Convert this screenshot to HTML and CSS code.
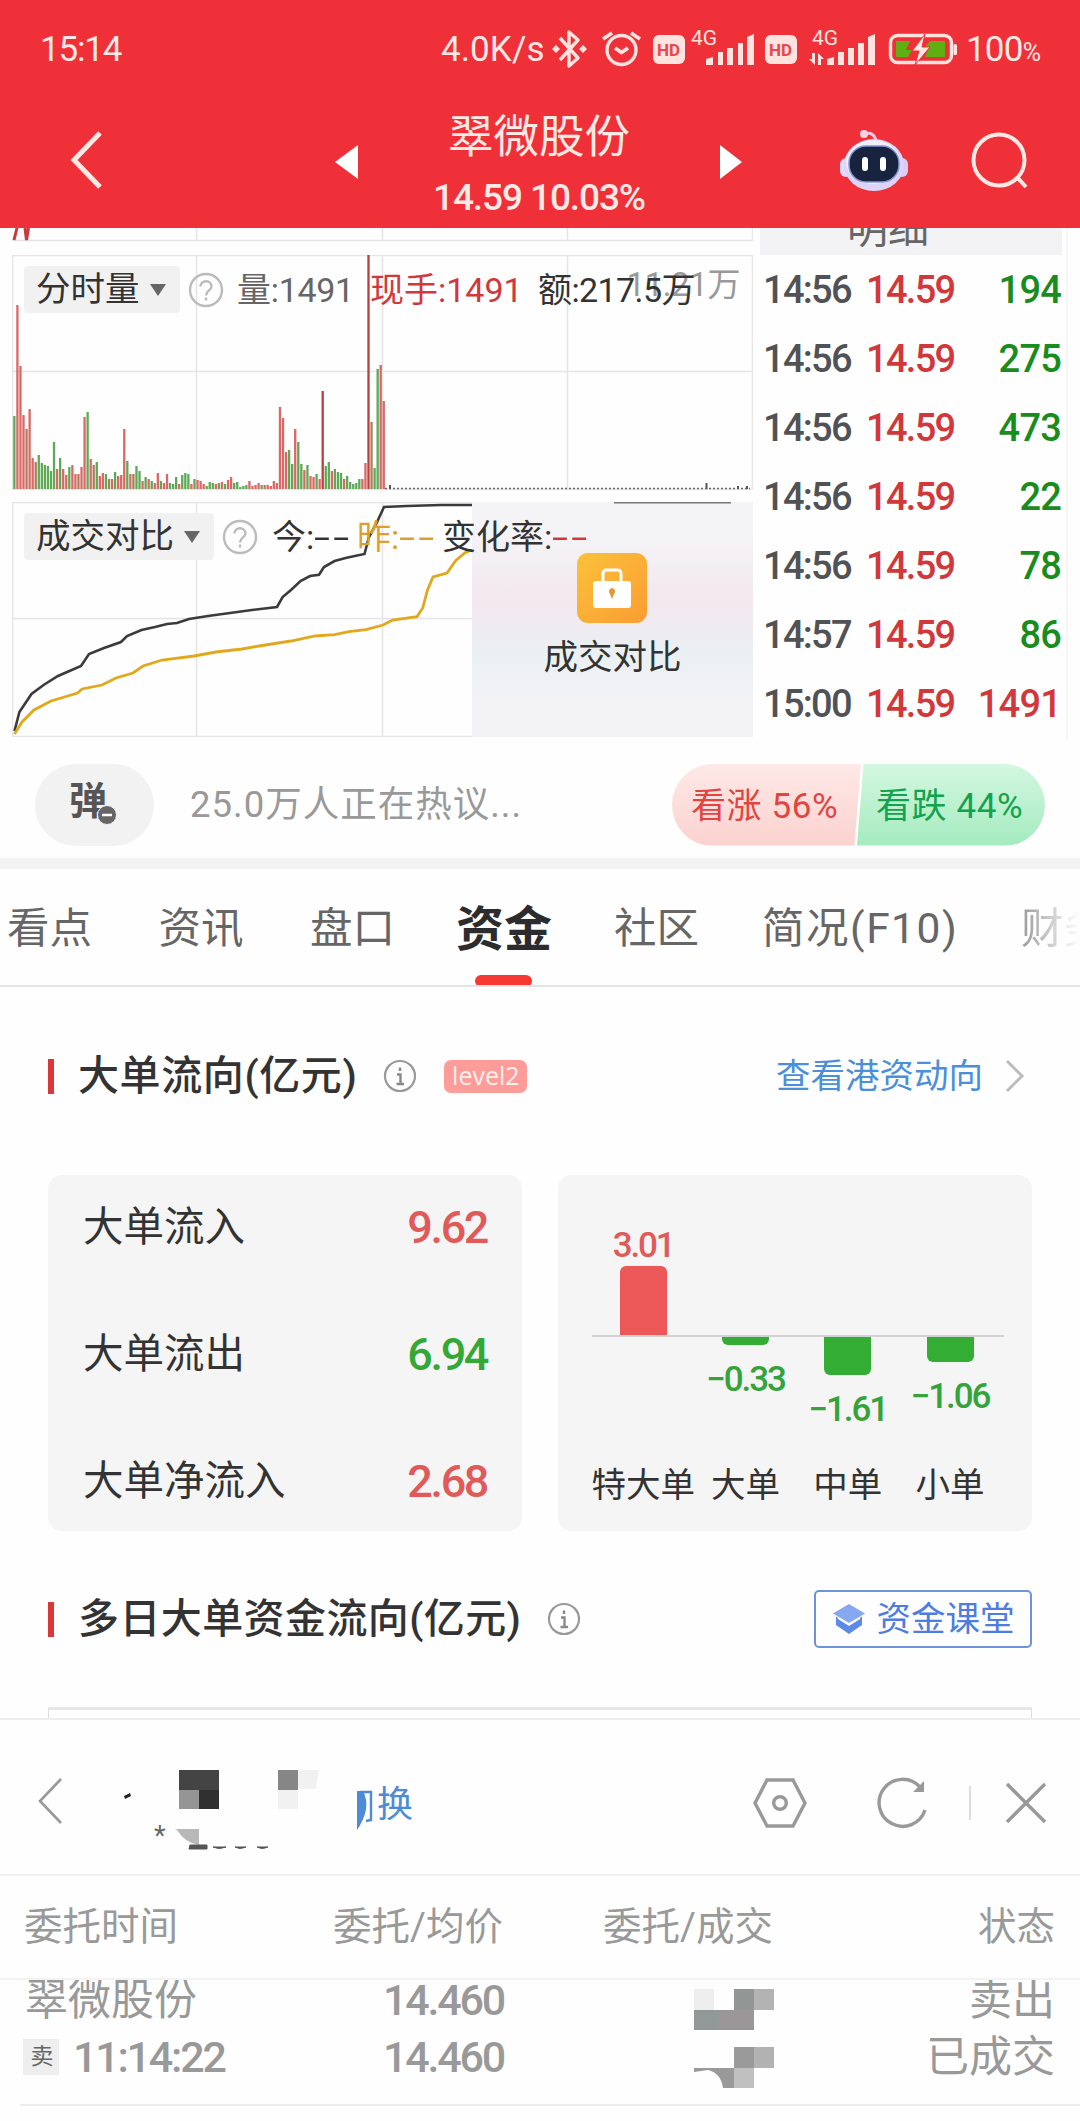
FILE: index.html
```html
<!DOCTYPE html>
<html lang="zh-CN">

<head>
    <meta charset="utf-8"/>
    <title>翠微股份</title>
    <meta name="viewport" content="width=device-width, initial-scale=1">
    <link rel="stylesheet" href="styles.css">
</head>
<body>
<header class="top">
    <div class="status">
        <span class="clock">15:14</span>
        <span class="speed">4.0K/s</span>
        <svg class="status-icons" width="408" height="48" viewBox="552 24 408 48">
            <g fill="none" stroke="#ffe3df" stroke-width="3.4" stroke-linejoin="round">
                <!-- bluetooth -->
                <path d="M560 37l18 20-9 8V31l9 8-18 20"/>
                <!-- alarm -->
                <circle cx="621.500" cy="49" r="14.500"/>
                <path d="M615 47l6.500 4.500L628 47M603 38l9-6M640 38l-9-6" stroke-width="3.800"/>
                <rect x="890.500" y="34.500" width="61" height="27" rx="7"/>
            </g>
            <g fill="#ffe3df">
                <path d="M552 48l4-4 4 4-4 4zM579 48l4-4 4 4-4 4z"/>
                <rect x="653" y="34" width="32" height="29" rx="6"/>
                <rect x="765" y="34" width="32" height="29" rx="6"/>
                <path d="M706 64v-6l7-2v8zM718 64V51h5v13zM727 64V47h6v17zM738 64V42h5v22zM747 64V36l7-3v31z"/>
                <path d="M827 64v-6l7-2v8zM838 64V51h6v13zM848 64V47h6v17zM858 64V42h6v22zM868 64V36l7-3v31z"/>
                <path d="M812 52h3v12l-6-6h3zM818 64V52l6 6h-3v6z"/>
                <rect x="953.500" y="43" width="3.500" height="11" rx="1.500"/>
                <text x="691" y="44" font-size="21">4G</text>
                <text x="812" y="44" font-size="21">4G</text>
            </g>
            <g fill="#e8474a" font-size="17" font-weight="700">
                <text x="657" y="54.500">HD</text>
                <text x="769" y="54.500">HD</text>
            </g>
            <path d="M896 40h14l-4 9h6l-4 7h-12zM930 40h15v16h-20l4-9h-5z" fill="#5fae12"/>
            <path d="M925 33l-13 17h7l-4 14 15-18h-8z" fill="#ffe9e4" stroke="#f03038" stroke-width="1"/>
        </svg>
        <span class="battery">100<small>%</small></span>
    </div>
    <nav class="nav">
        <svg class="back" width="36" height="62" viewBox="0 0 36 62"><path d="M31 4L5 31l26 27" fill="none" stroke="#ffe9e4" stroke-width="5"/></svg>
        <svg class="prev" width="23" height="34" viewBox="0 0 23 34"><path d="M23 0v34L0 17z" fill="#fff"/></svg>
        <div class="title">
            <h1>翠微股份</h1>
            <p>14.59 10.03%</p>
        </div>
        <svg class="next" width="22" height="34" viewBox="0 0 22 34"><path d="M0 0v34l22-17z" fill="#fff"/></svg>
        <svg class="robot" width="68" height="64" viewBox="0 0 68 64">
            <path d="M25 6c6-2 10 1 11 7" fill="none" stroke="#f6c4dc" stroke-width="3"/>
            <circle cx="24" cy="6" r="4" fill="#fbd0e0"/>
            <rect x="0" y="30" width="12" height="19" rx="6" fill="#e3d9fb"/>
            <rect x="56" y="30" width="12" height="19" rx="6" fill="#d9cdf8"/>
            <ellipse cx="34" cy="37" rx="30" ry="26" fill="#dcd4fa"/>
            <ellipse cx="33" cy="34" rx="27" ry="22" fill="#f2effd"/>
            <rect x="9" y="18" width="50" height="36" rx="17" fill="#17233f" stroke="#8296cf" stroke-width="1.500"/>
            <rect x="22" y="29" width="6" height="14" rx="3" fill="#fff"/>
            <rect x="40" y="29" width="6" height="14" rx="3" fill="#fff"/>
        </svg>
        <svg class="search" width="58" height="58" viewBox="0 0 58 58"><g fill="none" stroke="#ffe9e4" stroke-width="4"><circle cx="28" cy="28" r="25.500"/><path d="M46 45l9 10"/></g></svg>
    </nav>
</header>

<section class="quote">
    <div class="charts">
        <svg class="strip" width="741" height="27" viewBox="12 228 741 27">
            <path class="grid" d="M12 240.500H752.500V228M196.500 228v12M382.500 228v12M567.500 228v12"/>
            <path d="M14 240l3-12M25 228l1.500 12 2-12" fill="none" stroke="#c8383c" stroke-width="3"/>
        </svg>
        <div class="panel volume">
            <svg class="plot" width="741" height="235" viewBox="12 255 741 235">
                <path class="grid" d="M12.500 255.500H752.500V489.500H12.500zM196.500 255v235M382.500 255v235M567.500 255v235M12 371.500H753"/>
                <g id="bars"></g>
                <path d="M385 488.500H750" stroke="#666" stroke-width="1.500" stroke-dasharray="2 2"/>
                <path d="M390 485v4M706.500 483v6M738 486v3M747 486v3" stroke="#555" stroke-width="2"/>
            </svg>
            <span class="peak">11.21万</span>
            <div class="readout">
                <span class="picker">分时量<i class="caret"></i></span>
                <svg class="help" width="36" height="36" viewBox="0 0 36 36"><use href="#help"/></svg>
                <span class="vol">量:1491</span>
                <span class="hand">现手:1491</span>
                <span class="amount">额:217.5万</span>
            </div>
        </div>
        <div class="panel compare">
            <svg class="plot" width="741" height="235" viewBox="12 502 741 235">
                <path class="grid" d="M12.500 502.500H752.500V736.500H12.500zM196.500 502v235M382.500 502v235M12 618.500H753"/>
                <polyline fill="none" stroke="#3b3b3d" stroke-width="2.600" points="14.500,731 19.400,712 31.500,694 43.600,685 58,676 81,666 89,654 104,648 121,642 127,636 141.500,630 155,627 167,624 177,623 189,619 208,616 230,613 252,610 277,607 282.600,597 291,590 300.500,581 310,576 319,574.700 324,567 334.500,561 346.600,557.700 364.500,554 369,537 375.700,525 384,507 407,506 441,505 472,505"/>
                <polyline fill="none" stroke="#e2a81c" stroke-width="2.800" points="14.500,734 22,722 34,710 51,701 77.600,693 82,689 102,685 116,678 133,673 143,666 162,660 194,656 216,652 242,649 259,646 291,641 315,636 334.500,634.700 349,631.700 366,629.700 383,625 392.600,620 417,616.700 422.700,608 427.500,590 433,577 447,573 455.600,560.700 465,552.700 472,550"/>
            </svg>
            <div class="locked">
                <svg width="70" height="70" viewBox="0 0 70 70">
                    <defs><linearGradient id="gold" x1="0" y1="0" x2="1" y2="1"><stop offset="0" stop-color="#fcc13a"/><stop offset="1" stop-color="#fa9d33"/></linearGradient></defs>
                    <rect width="70" height="70" rx="11" fill="url(#gold)"/>
                    <rect x="16" y="28" width="38" height="27" rx="3" fill="#fff"/>
                    <path d="M26 29v-8q0-4 4-4h10q4 0 4 4v8" fill="none" stroke="#fff" stroke-width="3"/>
                    <path d="M35 35a3.500 3.500 0 0 1 2 6l-2 5-2-5a3.500 3.500 0 0 1 2-6z" fill="#e79a2a"/>
                </svg>
                <span>成交对比</span>
            </div>
            <div class="readout">
                <span class="picker wide">成交对比<i class="caret"></i></span>
                <svg class="help" width="36" height="36" viewBox="0 0 36 36"><use href="#help"/></svg>
                <span class="today">今:<b>--</b></span>
                <span class="yesterday">昨:<b>--</b></span>
                <span class="rate">变化率:<b class="red">--</b></span>
            </div>
        </div>
    </div>
    <div class="ticks">
        <div class="ticks-head"><span>明细</span></div>
        <ul>
            <li><span>14:56</span><span class="red">14.59</span><span class="green">194</span></li>
            <li><span>14:56</span><span class="red">14.59</span><span class="green">275</span></li>
            <li><span>14:56</span><span class="red">14.59</span><span class="green">473</span></li>
            <li><span>14:56</span><span class="red">14.59</span><span class="green">22</span></li>
            <li><span>14:56</span><span class="red">14.59</span><span class="green">78</span></li>
            <li><span>14:57</span><span class="red">14.59</span><span class="green">86</span></li>
            <li><span>15:00</span><span class="red">14.59</span><span class="red">1491</span></li>
        </ul>
    </div>
</section>

<section class="talk">
    <div class="danmu">弹<svg width="20" height="20" viewBox="0 0 20 20"><circle cx="10" cy="10" r="9.500" fill="#666" stroke="#f2f2f2"/><path d="M5 10h10" stroke="#fff" stroke-width="2.500"/></svg></div>
    <span class="hot">25.0万人正在热议...</span>
    <div class="vote"><span class="up">看涨 56%</span><span class="down">看跌 44%</span></div>
</section>

<nav class="tabs">
    <span>看点</span>
    <span>资讯</span>
    <span>盘口</span>
    <span class="active">资金</span>
    <span>社区</span>
    <span class="f10">简况(F10)</span>
    <span class="fade">财务</span>
</nav>

<main class="funds">
    <div class="heading first">
        <h2>大单流向(亿元)</h2>
        <svg class="info" width="34" height="34" viewBox="0 0 34 34"><use href="#info"/></svg>
        <span class="level">level2</span>
        <a class="more">查看港资动向<svg width="20" height="36" viewBox="0 0 20 36"><path d="M2 3l15 15L2 33" fill="none" stroke="#bbb" stroke-width="3"/></svg></a>
    </div>
    <div class="cards">
        <div class="card flow">
            <p><span>大单流入</span><b class="up">9.62</b></p>
            <p><span>大单流出</span><b class="down">6.94</b></p>
            <p><span>大单净流入</span><b class="up">2.68</b></p>
        </div>
        <div class="card orders">
            <div class="col"><div class="above"><em class="up">3.01</em><i style="height:69px"></i></div><div class="below"></div><span>特大单</span></div>
            <div class="col"><div class="above"></div><div class="below"><i style="height:8px"></i><em>−0.33</em></div><span>大单</span></div>
            <div class="col"><div class="above"></div><div class="below"><i style="height:38px"></i><em>−1.61</em></div><span>中单</span></div>
            <div class="col"><div class="above"></div><div class="below"><i style="height:25px"></i><em>−1.06</em></div><span>小单</span></div>
        </div>
    </div>
    <div class="heading second">
        <h2>多日大单资金流向(亿元)</h2>
        <svg class="info" width="34" height="34" viewBox="0 0 34 34"><use href="#info"/></svg>
        <a class="class-btn"><svg width="34" height="32" viewBox="0 0 34 32"><path d="M17 1l16 9.500L17 20 1 10.500z" fill="#86a8ee"/><path d="M4 13.500l13 8 13-8V22l-13 9L4 22z" fill="#5c8ae6"/><path d="M6 15l11 7 11-7" fill="none" stroke="#fff" stroke-width="1.500"/></svg>资金课堂</a>
    </div>
    <div class="next-box"></div>
</main>

<section class="trade">
    <div class="account">
        <svg class="acc-back" width="28" height="50" viewBox="0 0 28 50"><path d="M24 3L3 25l21 22" fill="none" stroke="#999" stroke-width="2.600"/></svg>
        <!-- censored account name -->
        <svg class="mosaic" width="212" height="100" viewBox="115 1757 212 100">
            <path d="M124 1796l6-3 1 3-6 3z" fill="#222"/>
            <path d="M179 1770h40v20h-40z" fill="#444"/>
            <path d="M179 1790h20v19h-20z" fill="#959595"/>
            <path d="M199 1790h20v19h-20z" fill="#303030"/>
            <path d="M278 1770h20v20h-20z" fill="#868686"/>
            <path d="M298 1770h21l-3 19h-18zM278 1790h20v19h-20z" fill="#f1f1f1"/>
            <path d="M175 1829h24v16q-14-2-22-15z" fill="#b8b8b8"/>
            <path d="M190 1845h17v4h-18zM213 1847q6 3 13 0zM235 1847q5 3 11 0zM257 1847q5 3 11 0z" fill="#555" stroke="#555"/>
            <text x="154" y="1845" font-size="27" fill="#666">*</text>
        </svg>
        <span class="switch"><svg width="17" height="42" viewBox="0 0 17 42"><path d="M0 2h6q9 17-6 39z" fill="#4d8bd8"/><path d="M3 3h11v28l-5 1" fill="none" stroke="#4d8bd8" stroke-width="2.400"/></svg>换</span>
        <svg class="gear" width="56" height="52" viewBox="0 0 56 52"><g fill="none" stroke="#999" stroke-width="3.400"><path d="M15 3h26l12 23-12 23H15L3 26z"/><circle cx="28" cy="26" r="6.300"/></g></svg>
        <svg class="reload" width="54" height="54" viewBox="0 0 54 54"><path d="M49 34A23.500 23.500 0 1 1 44 11" fill="none" stroke="#999" stroke-width="3.400"/><path d="M48 5v11H37z" fill="#999"/></svg>
        <span class="sep"></span>
        <svg class="close" width="42" height="42" viewBox="0 0 42 42"><path d="M2 2l38 38M40 2L2 40" stroke="#999" stroke-width="3.400"/></svg>
    </div>
    <div class="row head"><span>委托时间</span><span>委托/均价</span><span>委托/成交</span><span>状态</span></div>
    <div class="orders-list">
        <div class="row name"><span>翠微股份</span><span>14.460</span>
            <span><svg width="81" height="42" viewBox="0 0 81 42"><path d="M0 0h20v21H0z" fill="#eee"/><path d="M40 0h20v41H40z" fill="#929695"/><path d="M60 0h20v21H60z" fill="#b3b3b3"/><path d="M0 21h25v20H0z" fill="#919897"/><path d="M25 21h35v20H25z" fill="#9b9798"/></svg></span>
            <span>卖出</span></div>
        <div class="row time"><span><i class="sell">卖</i>11:14:22</span><span>14.460</span>
            <span><svg width="81" height="42" viewBox="0 0 81 42"><path d="M40 0h20v21H40z" fill="#9a9a9a"/><path d="M60 0h20v21H60z" fill="#b2b2b2"/><path d="M0 21h40v20H29q-2-15-15-18L0 25z" fill="#999"/><path d="M40 21h20v20H40z" fill="#c0c0c0"/></svg></span>
            <span>已成交</span></div>
    </div>
</section>

<svg width="0" height="0" class="symbols">
    <symbol id="help" viewBox="0 0 36 36"><circle cx="18" cy="18" r="16" fill="none" stroke="#bbb" stroke-width="2.400"/><path d="M12.500 14.500c0-7 11-7 11 0 0 4-5.500 4-5.500 9M18 25.500v3" fill="none" stroke="#bbb" stroke-width="2.400"/></symbol>
    <symbol id="info" viewBox="0 0 34 34"><circle cx="17" cy="17" r="15" fill="none" stroke="#999" stroke-width="2.200"/><path d="M17 8.500v3.500M14 15.500h3.500V25M13.500 25h7.500" fill="none" stroke="#888" stroke-width="2.400"/></symbol>
</svg>

<script>
    // minute volume: r = up, g = down, b/d = darker bars, number = bar height
    var data = "g73 r184 r123 r74 b60 r80 r31 b27 g34 g26 g24 g23 g18 g47 r20 g31 r20 r14 g22 r24 r15 b15 r22 r72 g77 r30 b24 g27 r13 r16 g15 b10 r10 g17 r13 r14 r60 g28 r15 b15 g23 g18 r8 g12 r10 g8 r6 r16 g8 r6 r15 g6 g5 g12 r5 g14 g16 g15 r5 g10 r9 r8 r5 g3 g7 g6 r5 g6 r7 g5 r9 r12 g6 g7 g2 g3 g4 r8 r3 r4 r6 g4 r4 r4 r3 r8 r6 r82 r71 r37 g39 g25 r60 g47 g25 r19 g24 r13 r12 g15 r10 d98 g23 g27 r18 g20 g17 g16 r10 g13 g7 g5 g6 g10 r10 r26 d234 b67 g21 g120 r124 r88";
    var colors = {r: '#dc6765', g: '#5caa55', b: '#a9805c', d: '#b8403f'};
    var bars = document.getElementById('bars');

    data.split(' ').forEach(function (item, i) {
        var h = +item.slice(1);
        var rect = document.createElementNS('http://www.w3.org/2000/svg', 'rect');
        rect.setAttribute('x', 13.200 + i * 3.053);
        rect.setAttribute('y', 489 - h);
        rect.setAttribute('width', 2.300);
        rect.setAttribute('height', h);
        rect.setAttribute('fill', colors[item[0]]);
        bars.appendChild(rect);
    });
</script>
</body>
</html>
```

FILE: styles.css
```css
* {
    box-sizing: border-box;
}
body {
    margin: 0;
    width: 1080px;
    height: 2121px;
    overflow: hidden;
    background: #fefefe;
    color: #333;
    font-family: Roboto, "Noto Sans CJK SC", sans-serif;
    line-height: 1;
}
h1, h2, p, ul {
    margin: 0;
    padding: 0;
    font-weight: 400;
}
b, i, em {
    font-weight: inherit;
    font-style: normal;
}
svg {
    display: block;
    flex: none;
}
span {
    white-space: nowrap;
}
.symbols {
    position: absolute;
}

/* header */
.top {
    height: 228px;
    background: #f03038;
    color: #ffe9e4;
}
.status {
    display: flex;
    align-items: center;
    height: 97px;
    padding-left: 40px;
    font-size: 35px;
}
.clock {
    width: 401px;
    padding-top: 2px;
    letter-spacing: -1.2px;
}
.speed {
    width: 111px;
    padding-top: 2px;
    letter-spacing: 0.1px;
}
.battery {
    margin-left: 6px;
    padding-top: 1px;
    letter-spacing: -0.8px;
}
.battery small {
    font-size: 25px;
}
.nav {
    display: flex;
    height: 131px;
    padding-left: 69px;
}
.back {
    margin-top: 32px;
}
.prev {
    margin: 48px 0 0 230px;
}
.title {
    width: 362px;
    text-align: center;
}
.title h1 {
    margin-top: 18px;
    font-size: 45.5px;
}
.title p {
    margin-top: 18px;
    font-size: 37px;
    font-weight: 500;
    letter-spacing: -1.1px;
}
.next {
    margin-top: 48px;
}
.robot {
    margin: 31px 0 0 98px;
}
.search {
    margin: 35px 0 0 63px;
}

/* charts and ticks */
.quote {
    display: flex;
    height: 512px;
}
.charts {
    width: 741px;
    margin-left: 12px;
}
.grid {
    fill: none;
    stroke: #e6e4e6;
    stroke-width: 1.5;
}
.panel {
    position: relative;
    height: 235px;
    margin-bottom: 12px;
}
.plot {
    position: absolute;
    top: 0;
    left: 0;
}
.readout {
    position: relative;
    display: flex;
    align-items: center;
    padding: 11px 0 0 12px;
    font-size: 34px;
}
.picker {
    display: flex;
    align-items: center;
    width: 156px;
    height: 47px;
    padding-left: 12px;
    border-radius: 4px;
    background: #f1f1f2;
    font-size: 34.5px;
}
.picker.wide {
    width: 190px;
}
.caret {
    margin-left: 10px;
    border: 8px solid transparent;
    border-top: 12px solid #666;
    border-bottom: 0;
}
.help {
    margin-left: 8px;
}
.vol {
    width: 133px;
    margin-left: 13px;
    color: #666;
    letter-spacing: -0.3px;
}
.hand {
    width: 168px;
    color: #d0383c;
}
.amount {
    letter-spacing: -0.6px;
}
.peak {
    position: absolute;
    top: 13px;
    right: 13px;
    color: #999;
    font-size: 33px;
    letter-spacing: -0.4px;
}
.readout b {
    display: inline-block;
    letter-spacing: 2px;
    transform: scaleX(1.7);
    transform-origin: left;
}
.today {
    width: 85px;
    margin-left: 14px;
}
.yesterday {
    width: 85px;
    color: #dd9f2b;
}
.locked {
    position: absolute;
    top: 0;
    right: 0;
    display: flex;
    flex-direction: column;
    align-items: center;
    width: 281px;
    height: 235px;
    padding: 51px 0 0;
    background: linear-gradient(#777, #777) 142px 0 / 117px 1.5px no-repeat, linear-gradient(#f4f3f6 15%, #f3e8ee 42%, #eaf0f3 65%, #f3f3f6 85%);
}
.locked span {
    margin-top: 17px;
    font-size: 34.5px;
}
.locked svg {
    margin-right: 1px;
}
.red {
    color: #d0383c;
}
.green {
    color: #188c1c;
}
.ticks {
    width: 315px;
    padding-left: 7px;
    border-right: 2px solid #f6f5f7;
}
.ticks-head {
    width: 302px;
    height: 27px;
    overflow: hidden;
    background: #f3f2f4;
    color: #666;
    font-size: 41px;
}
.ticks-head span {
    display: block;
    margin-top: -19px;
    padding-left: 87px;
}
.ticks ul {
    list-style: none;
    width: 302px;
}
.ticks li {
    display: grid;
    grid-template-columns: 103px 96px 1fr;
    align-items: center;
    height: 69px;
    padding-left: 3px;
    color: #505255;
    font-size: 38px;
    font-weight: 500;
    letter-spacing: -1.7px;
}
.ticks li span:last-child {
    text-align: right;
    padding-right: 1px;
    letter-spacing: -0.8px;
}

/* discussion bar */
.talk {
    display: flex;
    align-items: center;
    height: 129px;
    padding: 11px 35px 0;
    border-bottom: 11px solid #f3f3f3;
}
.danmu {
    position: relative;
    flex: none;
    width: 119px;
    height: 82px;
    padding: 18px 0 0 34px;
    border-radius: 41px;
    background: #f2f2f2;
    color: #555;
    font-size: 38px;
    font-weight: 700;
}
.danmu svg {
    position: absolute;
    left: 62px;
    top: 41px;
}
.hot {
    flex: none;
    width: 518px;
    padding: 2px 0 0 36px;
    color: #999;
    font-size: 36.5px;
    letter-spacing: 1px;
}
.vote {
    display: flex;
    flex: none;
    width: 373px;
    height: 82px;
    border-radius: 41px;
    overflow: hidden;
    font-size: 35px;
    line-height: 85px;
    letter-spacing: 0.6px;
}
.vote .up {
    flex: none;
    width: 189px;
    padding-left: 19px;
    background: linear-gradient(#fee9e7, #fbd2cf);
    color: #e04540;
    clip-path: polygon(0 0, 100% 0, 96.500% 100%, 0 100%);
}
.vote .down {
    flex: none;
    width: 188px;
    margin-left: -4px;
    padding-left: 19px;
    background: linear-gradient(#d4f7e1, #a4ebbf);
    color: #12a34e;
    clip-path: polygon(3.500% 0, 100% 0, 100% 100%, 0 100%);
}

/* tabs */
.tabs {
    display: flex;
    align-items: center;
    height: 118px;
    padding-left: 7px;
    border-bottom: 2px solid #e4e4e4;
    overflow: hidden;
    color: #666;
    font-size: 42.5px;
}
.tabs span {
    flex: none;
    margin-right: 66.5px;
    padding-top: 5px;
}
.tabs span:nth-child(3) {
    margin-right: 61px;
}
.tabs .active {
    position: relative;
    margin-right: 62px;
    color: #2c2c2e;
    font-size: 48px;
    font-weight: 700;
}
.tabs .active::after {
    content: "";
    position: absolute;
    left: 19px;
    bottom: -33px;
    width: 57px;
    height: 12px;
    border-radius: 6px;
    background: #f63a33;
}
.tabs span:nth-child(5) {
    margin-right: 63px;
}
.tabs .f10 {
    width: 259px;
    margin-right: 0;
    letter-spacing: 1.5px;
}
.tabs .fade {
    margin-right: 0;
    background: linear-gradient(90deg, #999, #fefefe 58px);
    -webkit-background-clip: text;
    color: transparent;
}

/* fund flow */
.funds {
    height: 731px;
    padding: 0 48px;
    overflow: hidden;
}
.heading {
    display: flex;
    align-items: center;
}
.heading h2 {
    padding-left: 24px;
    border-left: 6px solid #d93838;
    font-size: 41px;
    font-weight: 500;
    line-height: 35px;
    letter-spacing: 0.4px;
}
.heading.first {
    height: 178px;
}
.heading.first h2 {
    letter-spacing: 0.6px;
}
.heading .info {
    margin-left: 26px;
}
.level {
    width: 83px;
    height: 33px;
    margin-left: 27px;
    border-radius: 7px;
    background: #fd9c98;
    color: #fff0ee;
    font-family: "Open Sans", sans-serif;
    font-size: 25px;
    line-height: 31px;
    text-align: center;
}
.more {
    display: flex;
    align-items: center;
    margin-left: auto;
    margin-right: 7px;
    color: #4a8fda;
    font-size: 34.5px;
}
.more svg {
    margin-left: 22px;
}
.cards {
    display: flex;
    justify-content: space-between;
    margin-top: 10px;
}
.card {
    width: 474px;
    height: 356px;
    border-radius: 14px;
    background: #f5f5f5;
}
.card.flow {
    padding: 0 35px;
}
.flow p {
    display: flex;
    justify-content: space-between;
    align-items: center;
    height: 127px;
    padding-top: 1px;
    font-size: 40.5px;
}
.flow p:first-child {
    height: 104px;
    margin-bottom: 11px;
}
.flow b {
    font-size: 45px;
    font-weight: 500;
    letter-spacing: -2.4px;
}
.flow .up, .orders .up {
    color: #e05a5a;
}
.flow .down {
    color: #34a836;
}
.orders {
    display: flex;
    padding: 0 34px;
    background: linear-gradient(#d2d2d2, #d2d2d2) 34px 160px / 412px 2px no-repeat #f5f5f5;
}
.col {
    width: 102.3px;
    flex: none;
    display: flex;
    flex-direction: column;
    align-items: center;
    font-size: 34.5px;
}
.above, .below {
    display: flex;
    flex-direction: column;
    align-items: center;
}
.above {
    height: 160px;
    justify-content: flex-end;
}
.below {
    height: 133px;
    padding-top: 2px;
}
.col em {
    color: #34a33a;
    font-size: 35px;
    font-weight: 500;
    letter-spacing: -2.1px;
    white-space: nowrap;
}
.above em {
    margin-bottom: 3px;
}
.below em {
    margin-top: 17px;
}
.col i {
    width: 47px;
    border-radius: 6px 6px 0 0;
    background: #ec5858;
}
.below i {
    border-radius: 0 0 6px 6px;
    background: #34ad35;
}
.heading.second {
    height: 58px;
    margin-top: 59px;
}
.class-btn {
    display: flex;
    align-items: center;
    justify-content: center;
    gap: 11px;
    width: 218px;
    height: 58px;
    margin-left: auto;
    border: 2px solid #6f92dc;
    border-radius: 5px;
    color: #4f7ce0;
    font-size: 34.5px;
}
.next-box {
    height: 30px;
    margin-top: 59px;
    border: 1px solid #ddd;
    border-top: 3px solid #e6e6e6;
}

/* trade panel */
.trade {
    border-top: 2px solid #eeeeef;
    background: #fefefe;
    color: #999;
}
.account {
    display: flex;
    align-items: center;
    height: 154px;
    padding: 12px 33px 0 37px;
}
.acc-back {
    margin-bottom: 4px;
}
.mosaic {
    margin: 8px 0 0 50px;
}
.switch {
    display: flex;
    align-items: center;
    margin-left: 30px;
    padding-top: 4px;
    color: #4d8bd8;
    font-size: 36px;
}
.switch svg {
    margin: 10px 3px 0 0;
}
.gear {
    margin-left: auto;
}
.reload {
    margin-left: 68px;
}
.sep {
    width: 2px;
    height: 34px;
    margin: 0 34px 0 39px;
    background: #ddd;
}
.row {
    display: grid;
    grid-template-columns: 240px 239px 270px 1fr;
    align-items: center;
    padding: 0 25px;
}
.row > span:nth-child(n+2) {
    justify-self: end;
}
.row.head {
    height: 106px;
    padding: 1px 25px 0 24px;
    border-top: 2px solid #f1f1f1;
    border-bottom: 2px solid #f3f3f3;
    font-size: 38.5px;
}
.orders-list {
    height: 126px;
    margin-left: 20px;
    overflow: hidden;
    border-bottom: 2px solid #eee;
}
.orders-list .row {
    margin-left: -20px;
    font-size: 43px;
}
.orders-list .row > span:nth-child(2) {
    letter-spacing: -2.2px;
    font-weight: 500;
}
.name {
    height: 52px;
    margin-top: -11px;
}
.name svg {
    margin: 20px -1px 0 0;
}
.time {
    height: 60px;
    margin-top: 4px;
}
.time svg {
    margin: 22px -1px 0 0;
}
.time > span:first-child {
    display: flex;
    align-items: center;
    margin-left: -2px;
    font-weight: 500;
    letter-spacing: -2.2px;
}
.sell {
    width: 36px;
    height: 36px;
    margin-right: 14px;
    background: #eee;
    color: #666;
    font-size: 23px;
    font-weight: 400;
    line-height: 35px;
    text-align: center;
}
```
